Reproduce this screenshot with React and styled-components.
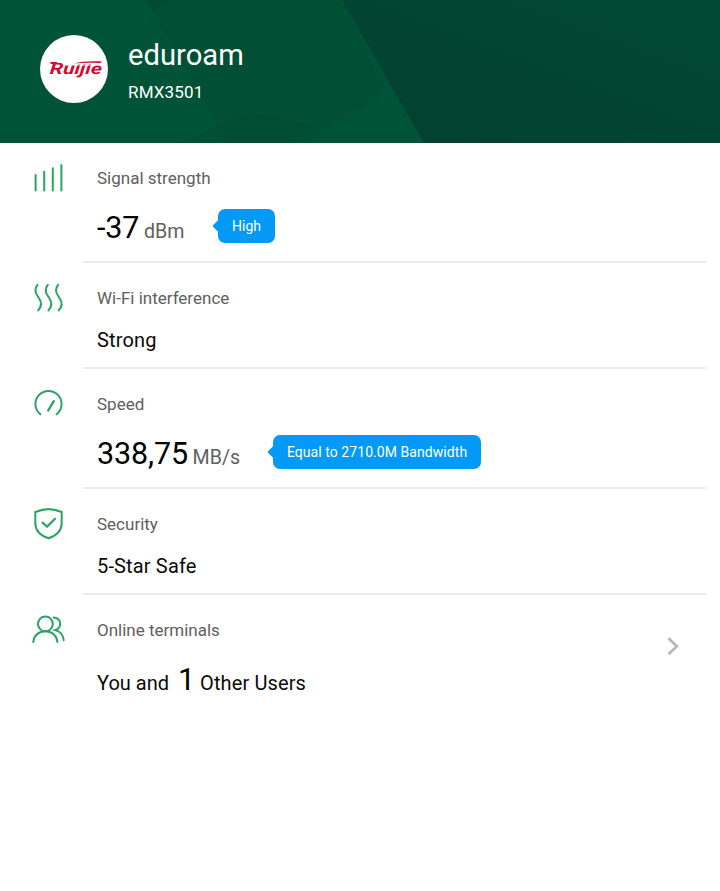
import React from "react";
import styled, { createGlobalStyle } from "styled-components";

const GlobalStyle = createGlobalStyle`
  * { box-sizing: border-box; }
  body { margin: 0; background: #fff; font-family: Roboto, sans-serif; }
`;

const Page = styled.main`
  width: 720px;
  min-height: 891px;
  background: #fff;
`;

const Header = styled.header`
  position: relative;
  display: flex;
  height: 143px;
  padding: 35px 40px 0;
  gap: 20px;
  color: #fff;
  background: #024432;
`;

const Backdrop = styled.svg`
  position: absolute;
  inset: 0;
`;

const Avatar = styled.div`
  position: relative;
  width: 68px;
  height: 68px;
  border-radius: 50%;
  background: #fff;
`;

const Titles = styled.div`
  position: relative;
  display: flex;
  flex-direction: column;
`;

const Network = styled.h1`
  margin: 3px 0 0;
  font-size: 29.2px;
  font-weight: 400;
  line-height: 34px;
`;

const Device = styled.span`
  margin-top: 10px;
  font-size: 17px;
  line-height: 20px;
  letter-spacing: 0.15px;
`;

const Row = styled.section`
  display: grid;
  grid-template-columns: 83px 1fr;
  height: ${(p) => p.$height}px;
  padding-right: 14px;
`;

const IconCell = styled.div`
  padding: 17px 0 0 30px;
  svg { display: block; }
`;

const Body = styled.div`
  display: flex;
  justify-content: space-between;
  padding: 25px 27px 0 14px;
  border-bottom: ${(p) => (p.$last ? "none" : "2px solid #ebebeb")};
`;

const Label = styled.div`
  font-size: 17px;
  line-height: 20px;
  color: #606060;
`;

const Value = styled.div`
  display: flex;
  align-items: baseline;
  margin-top: ${(p) => (p.$compact ? 20 : 22)}px;
  font-size: 20px;
  line-height: ${(p) => (p.$compact ? 24 : 36)}px;
  letter-spacing: ${(p) => (p.$compact ? 0.15 : 0)}px;
  color: #0a0a0a;
  white-space: pre;
`;

const Big = styled.span`
  font-size: 30.5px;
  line-height: 36px;
  letter-spacing: -0.1px;
  color: #000;
`;

const Count = styled(Big)`
  margin: 0 5px 0 9px;
`;

const Users = styled.span`
  letter-spacing: 0.12px;
`;

const Unit = styled.span`
  margin-left: 4.5px;
  font-size: 19.6px;
  color: #606060;
`;

const Badge = styled.span`
  position: relative;
  align-self: flex-start;
  height: 34px;
  margin: -1px 0 0 ${(p) => p.$gap}px;
  padding: 0 14px;
  border-radius: 7px;
  background: #0399f7;
  color: #fff;
  font-size: 14px;
  line-height: 34px;
  letter-spacing: 0.06px;
  &::before {
    content: "";
    position: absolute;
    left: -3.5px;
    top: 13px;
    width: 8px;
    height: 8px;
    border-radius: 1px;
    background: inherit;
    transform: rotate(45deg);
  }
`;

const Chevron = styled.svg`
  margin-top: 16px;
`;

const Icon = ({ children }) => (
  <svg width="38" height="38" viewBox="0 0 38 38" fill="none" stroke="#28a562" strokeWidth="2" strokeLinecap="round">
    {children}
  </svg>
);

const SignalIcon = () => (
  <Icon><path d="M5.6 15V30.4M14.2 11.7V30.4M22.8 8.2V30.4M31.4 5V30.4" /></Icon>
);

const WaveIcon = () => (
  <Icon>
    {[0, 10.3, 20.6].map((x) => (
      <path key={x} transform={`translate(${x} 0)`} d="M7.5 4.8C4.7 8.5 4.8 12 7.3 15.5L9 18.2C11.8 22.2 11.4 26.7 8.2 30.4" />
    ))}
  </Icon>
);

const SpeedIcon = () => (
  <Icon>
    <path d="M10.4 28.3A13.1 13.1 0 1 1 26.6 28.3" />
    <path d="M18.2 24.5L23.8 15.2" strokeWidth="2.3" />
  </Icon>
);

const ShieldIcon = () => (
  <Icon>
    <path strokeLinejoin="round" d="M18.5 2.9C13.8 3.4 9.4 4.2 5.3 6V17.2C5.3 25.2 11.2 29.7 18.5 32.2C25.8 29.7 31.7 25.2 31.7 17.2V6C27.6 4.2 23.2 3.4 18.5 2.9Z" />
    <path d="M12.5 16.6L17.1 20.6L25 12.8" strokeWidth="2.2" strokeLinejoin="round" />
  </Icon>
);

const UsersIcon = () => (
  <Icon>
    <circle cx="15.4" cy="11.9" r="7.4" />
    <path d="M3.3 30C3.6 23.7 8.8 19.3 15.3 19.3S27 23.7 27.4 30M23.6 5.4C27.3 5.4 30.2 8.3 30.2 11.8C30.2 15 28 17.3 25.2 18.1C30.2 19.5 33.3 23 33.7 28.2" />
  </Icon>
);

const rows = [
  { label: "Signal strength", icon: <SignalIcon />, height: 120, value: <><Big>-37</Big><Unit>dBm</Unit><Badge $gap={33.5}>High</Badge></> },
  { label: "Wi-Fi interference", icon: <WaveIcon />, height: 106, compact: true, value: "Strong" },
  { label: "Speed", icon: <SpeedIcon />, height: 120, value: <><Big>338,75</Big><Unit>MB/s</Unit><Badge $gap={32.8}>Equal to 2710.0M Bandwidth</Badge></> },
  { label: "Security", icon: <ShieldIcon />, height: 106, compact: true, value: "5-Star Safe" },
  { label: "Online terminals", icon: <UsersIcon />, height: 120, last: true, value: <>You and<Count>1</Count><Users>Other Users</Users></> },
];

export default function App() {
  return (
    <Page>
      <GlobalStyle />
      <Header>
        <Backdrop width="720" height="143" viewBox="0 0 720 143">
          <defs>
            <linearGradient id="base" x1="0" y1="1" x2="1" y2="0">
              <stop offset="0" stopColor="#03402f" />
              <stop offset="1" stopColor="#004934" />
            </linearGradient>
          </defs>
          <path fill="url(#base)" d="M340 0H720V143H340Z" />
          <path fill="#015337" d="M0 0H342L424 143H0Z" />
          <path fill="#014b35" d="M146 0H168L153 12Z" />
          <path fill="#014f35" opacity=".7" d="M153 12L228 143H305L385 90L342 0H168Z" />
          <path fill="#014b33" opacity=".5" d="M180 143L250 113L310 125L290 143Z" />
        </Backdrop>
        <Avatar>
          <svg width="68" height="68" viewBox="0 0 68 68">
            <g fill="#d40a35" transform="translate(9.5 38.5) skewX(-5)">
              <text fontFamily="Roboto, sans-serif" fontSize="16" fontWeight="700" fontStyle="italic" textLength="52" lengthAdjust="spacingAndGlyphs">Ruijie</text>
            </g>
            <path fill="#fff" d="M33 25.5H64V29H33Z" />
            <path fill="#d40a35" d="M34 28.6C42 26.2 51 25.8 62 26.4L60 28.2C51 27.3 43 27.8 34 28.6ZM10 27.1H17L16.5 29H11Z" />
          </svg>
        </Avatar>
        <Titles>
          <Network>eduroam</Network>
          <Device>RMX3501</Device>
        </Titles>
      </Header>
      {rows.map((r) => (
        <Row key={r.label} $height={r.height}>
          <IconCell>{r.icon}</IconCell>
          <Body $last={r.last}>
            <div>
              <Label>{r.label}</Label>
              <Value $compact={r.compact}>{r.value}</Value>
            </div>
            {r.last && (
              <Chevron width="12" height="20" viewBox="0 0 12 20" fill="none" stroke="#b5b5b5" strokeWidth="2.6">
                <path d="M1.5 2.2L9.8 10.2L1.5 18.2" />
              </Chevron>
            )}
          </Body>
        </Row>
      ))}
    </Page>
  );
}
